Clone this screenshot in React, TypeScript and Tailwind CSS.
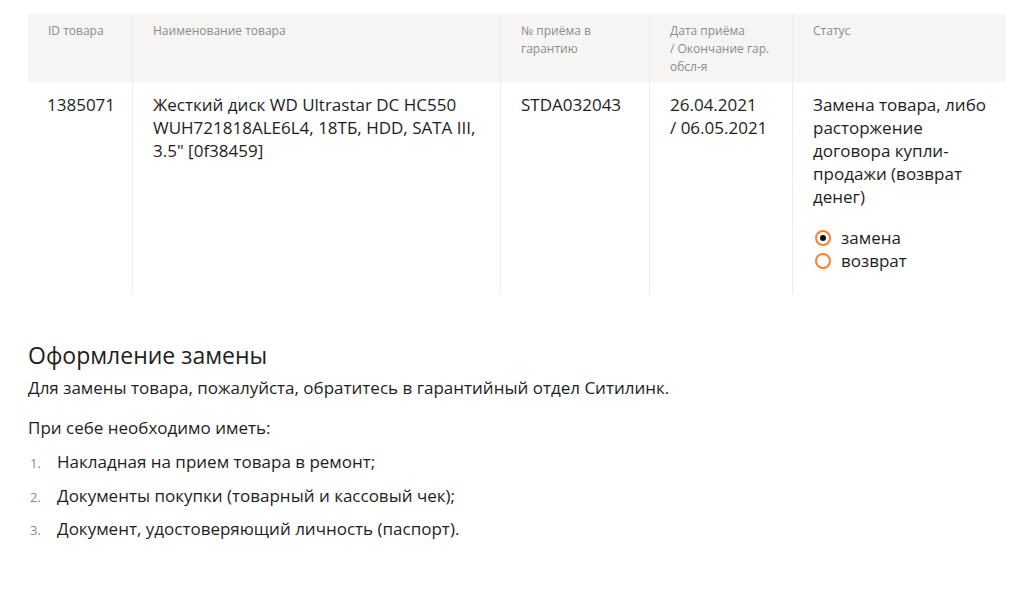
export default function App() {
  const font = { fontFamily: "'Open Sans', 'Noto Sans', sans-serif" };
  const head = "bg-[#f6f5f3] border-l border-[#ebebeb] px-[20px] pt-[8px] pb-[6px] text-[12px] leading-[18px] text-[#8b8b8b]";
  const cell = "border-l border-[#ebebeb] pl-[20px] pr-[18px] pt-[11px] text-[17px] leading-[23px]";
  return (
    <div className="w-[1027px] h-[597px] bg-white text-[#1e1e1e]" style={font}>
      <div className="pt-[14px] px-[28px] w-[1006px] box-content">
        <div className="grid grid-cols-[104px_368px_149px_143px_214px]">
          <div className="bg-[#f6f5f3] px-[20px] pt-[8px] pb-[6px] text-[12px] leading-[18px] text-[#8b8b8b] h-[68px]">ID товара</div>
          <div className={head}>Наименование товара</div>
          <div className={head}>№ приёма в<br />гарантию</div>
          <div className={head}>Дата приёма<br />/ Окончание гар.<br />обсл-я</div>
          <div className={head}>Статус</div>

          <div className="pl-[19px] pr-[10px] pt-[11px] text-[17px] leading-[23px]">1385071</div>
          <div className={cell}>Жесткий диск WD Ultrastar DC HC550 WUH721818ALE6L4, 18ТБ, HDD, SATA III, 3.5" [0f38459]</div>
          <div className={cell}>STDA032043</div>
          <div className={cell}>26.04.2021<br />/ 06.05.2021</div>
          <div className={cell + " pb-[22px]"}>
            <div>Замена товара, либо расторжение договора купли-продажи (возврат денег)</div>
            <div className="mt-[18px] flex flex-col">
              <label className="flex items-center gap-[10px] h-[23px]">
                <span className="ml-[2px] w-[16px] h-[16px] rounded-full border-2 border-[#ff7f2e] flex items-center justify-center">
                  <span className="w-[6px] h-[6px] rounded-full bg-[#111]" />
                </span>
                <span>замена</span>
              </label>
              <label className="flex items-center gap-[10px] h-[23px]">
                <span className="ml-[2px] w-[16px] h-[16px] rounded-full border-2 border-[#ff7f2e]" />
                <span>возврат</span>
              </label>
            </div>
          </div>
        </div>

        <div className="mt-[47px]">
          <h2 className="text-[23px] leading-[28px] text-[#1e1e1e]">Оформление замены</h2>
          <p className="text-[17px] leading-[23px] mt-[7px]">Для замены товара, пожалуйста, обратитесь в гарантийный отдел Ситилинк.</p>
          <p className="text-[17px] leading-[23px] mt-[17px]">При себе необходимо иметь:</p>
          <ol className="mt-[11px] flex flex-col gap-[10.5px]">
            {[
              "Накладная на прием товара в ремонт;",
              "Документы покупки (товарный и кассовый чек);",
              "Документ, удостоверяющий личность (паспорт).",
            ].map((t, i) => (
              <li key={i} className="flex items-baseline h-[23px] text-[17px] leading-[23px]">
                <span className="w-[29px] pl-[2px] text-[13px] leading-[13px] text-[#8b8b8b]">{i + 1}.</span>
                <span>{t}</span>
              </li>
            ))}
          </ol>
        </div>
      </div>
    </div>
  );
}
